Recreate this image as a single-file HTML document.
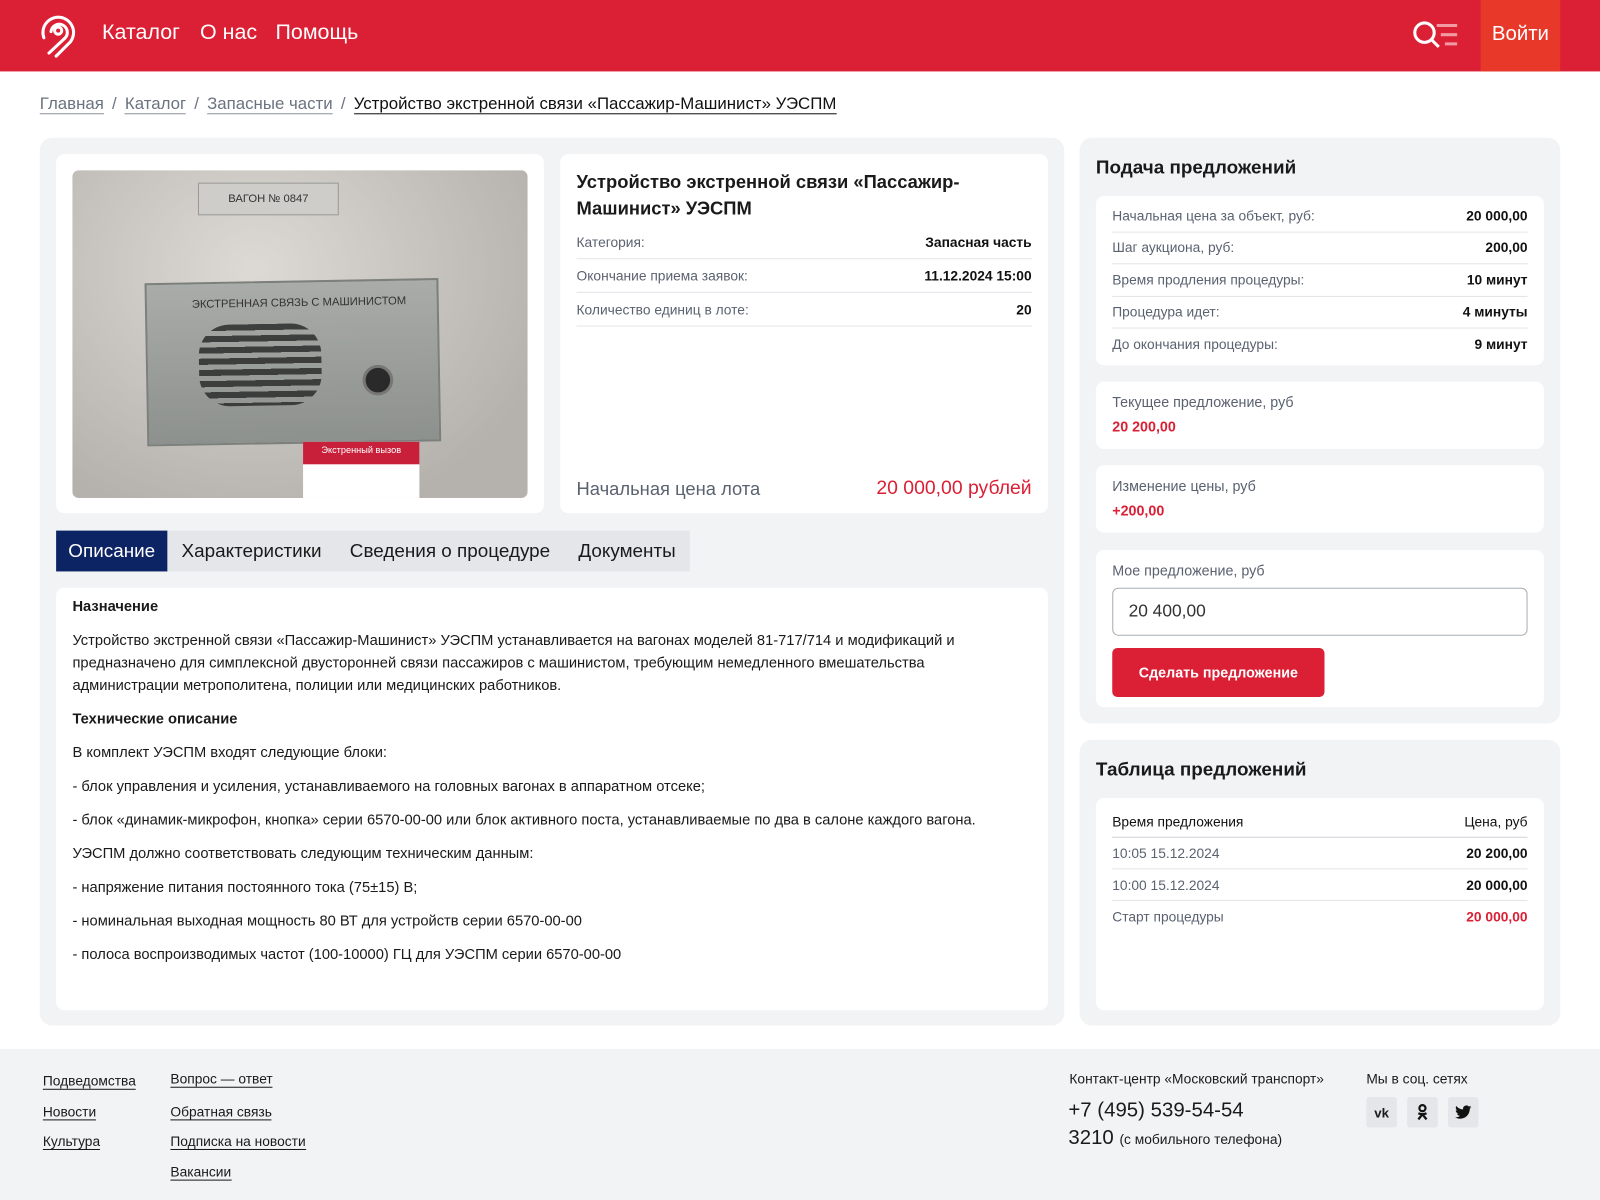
<!DOCTYPE html>
<html><head><meta charset="utf-8"><style>
*{box-sizing:border-box;margin:0;padding:0}
html,body{width:1600px;height:1200px;overflow:hidden;background:#fff}
#w{width:1568px;height:1176px;position:relative;transform:scale(1.020408);transform-origin:0 0;font-family:"Liberation Sans",sans-serif;color:#1a1a1a}
.abs{position:absolute}
.hdr{left:0;top:0;width:1568px;height:70px;background:#db1f35}
.nav{color:#fff;font-size:21px;top:20px}
.bc{top:93px;left:39px;font-size:16.5px;color:#6b7380}
.bc a{color:#6b7380;text-decoration:none;border-bottom:1px solid #8a919c}
.bc span{margin:0 8px}
.panel{background:#f2f3f5;border-radius:12px}
.card{background:#fff;border-radius:8px}
.row{display:flex;justify-content:space-between;border-bottom:1px solid #e3e5e8;font-size:13.5px;color:#5a6270;height:33px;align-items:center}
.row b{color:#111;font-size:13.5px}
.desc{font-size:14.4px;line-height:22px;color:#1a1a1a}
.desc p{margin-bottom:11px}
.ft a{color:#1a1a1a;font-size:13.5px;text-decoration:none;border-bottom:1px solid #1a1a1a;position:absolute}
.soc{width:30px;height:30px;background:#e4e6ea;border-radius:3px;display:flex;align-items:center;justify-content:center;font-weight:bold;font-size:13px;top:1075px;position:absolute}
.tab{white-space:nowrap;height:40px;line-height:40px;text-align:center}
</style></head><body><div id="w">
<div class="abs hdr"></div>
<svg class="abs" style="left:38px;top:13px" width="38" height="44" viewBox="0 0 38 44" fill="none" stroke="#fff" stroke-width="3" stroke-linecap="round">
<path d="M10 39 L26 24 A8 8 0 1 0 12 18"/><path d="M17 42 L31 28 A15 15 0 1 0 5 24"/><circle cx="19" cy="17" r="3.5"/></svg>
<div class="abs nav" style="left:100px">Каталог</div>
<div class="abs nav" style="left:196px">О нас</div>
<div class="abs nav" style="left:270px">Помощь</div>
<svg class="abs" style="left:1384px;top:20px" width="46" height="30" viewBox="0 0 46 30" fill="none" stroke-width="3">
<circle cx="12" cy="12" r="9.5" stroke="#fff"/><path d="M19 19 L26 26" stroke="#fff"/><path d="M24 5H44M28 14H44M32 23H44" stroke="#f29aa3"/></svg>
<div class="abs" style="left:1451px;top:0;width:78px;height:70px;background:#e8382a;color:#fff;font-size:20px;line-height:66px;text-align:center">Войти</div>

<div class="abs bc"><a>Главная</a><span>/</span><a>Каталог</a><span>/</span><a>Запасные части</a><span>/</span><a style="color:#111;border-color:#111">Устройство экстренной связи «Пассажир-Машинист» УЭСПМ</a></div>

<div class="abs panel" style="left:39px;top:135px;width:1004px;height:870px"></div>
<div class="abs card" style="left:55px;top:151px;width:478px;height:352px"></div>
<div class="abs" style="left:71px;top:167px;width:446px;height:321px;border-radius:6px;overflow:hidden;background:radial-gradient(ellipse at 40% 30%,#ddd9d4,#b5b1ac 80%)">
 <div class="abs" style="left:123px;top:12px;width:138px;height:32px;background:#cfcdca;border:1px solid #999;font-size:11px;line-height:30px;text-align:center;color:#333">ВАГОН № 0847</div>
 <div class="abs" style="left:72px;top:108px;width:288px;height:160px;background:linear-gradient(#a9aca8,#8d918e);border:2px solid #7c807d;transform:rotate(-1deg)">
  <div style="font-size:11px;color:#333;margin:14px 0 0 44px">ЭКСТРЕННАЯ СВЯЗЬ С МАШИНИСТОМ</div>
  <div class="abs" style="left:50px;top:40px;width:120px;height:80px;background:repeating-linear-gradient(#2b2d2c 0 6px,transparent 6px 11px);border-radius:30px;opacity:.85"></div>
  <div class="abs" style="left:210px;top:82px;width:30px;height:30px;border-radius:50%;background:#2a2a2a;border:3px solid #777"></div>
 </div>
 <div class="abs" style="left:226px;top:266px;width:114px;height:55px;background:#fff"><div style="background:#c8203a;color:#fff;font-size:9px;height:22px;text-align:center;line-height:16px">Экстренный вызов</div></div>
</div>
<div class="abs card" style="left:549px;top:151px;width:478px;height:352px;padding:14px 16px">
 <div style="font-size:18px;font-weight:bold;line-height:26px;margin-bottom:4px">Устройство экстренной связи «Пассажир-<br>Машинист» УЭСПМ</div>
 <div class="row"><span>Категория:</span><b>Запасная часть</b></div>
 <div class="row"><span>Окончание приема заявок:</span><b>11.12.2024 15:00</b></div>
 <div class="row"><span>Количество единиц в лоте:</span><b>20</b></div>
 <div class="abs" style="left:16px;top:318px;font-size:18px;color:#5a6270">Начальная цена лота</div>
 <div class="abs" style="right:16px;top:317px;font-size:19px;color:#db1f35">20 000,00 рублей</div>
</div>
<div class="abs" style="left:55px;top:520px;width:621px;height:40px;background:#e4e6ea;font-size:18.5px;display:flex">
 <div class="tab" style="background:#0c2463;color:#fff;width:109px">Описание</div>
 <div class="tab" style="width:165px">Характеристики</div><div class="tab" style="width:224px">Сведения о процедуре</div><div class="tab" style="width:123px">Документы</div>
</div>
<div class="abs card desc" style="left:55px;top:576px;width:972px;height:414px;padding:8px 16px">
<p><b>Назначение</b></p>
<p>Устройство экстренной связи «Пассажир-Машинист» УЭСПМ устанавливается на вагонах моделей 81-717/714 и модификаций и предназначено для симплексной двусторонней связи пассажиров с машинистом, требующим немедленного вмешательства администрации метрополитена, полиции или медицинских работников.</p>
<p><b>Технические описание</b></p>
<p>В комплект УЭСПМ входят следующие блоки:</p>
<p>- блок управления и усиления, устанавливаемого на головных вагонах в аппаратном отсеке;</p>
<p>- блок «динамик-микрофон, кнопка» серии 6570-00-00 или блок активного поста, устанавливаемые по два в салоне каждого вагона.</p>
<p>УЭСПМ должно соответствовать следующим техническим данным:</p>
<p>- напряжение питания постоянного тока (75±15) В;</p>
<p>- номинальная выходная мощность 80 ВТ для устройств серии 6570-00-00</p>
<p>- полоса воспроизводимых частот (100-10000) ГЦ для УЭСПМ серии 6570-00-00</p>
</div>

<div class="abs panel" style="left:1058px;top:135px;width:471px;height:574px"></div>
<div class="abs" style="left:1074px;top:153px;font-size:18.5px;font-weight:bold">Подача предложений</div>
<div class="abs card" style="left:1074px;top:192px;width:439px;height:166px;padding:4px 16px">
 <div class="row" style="height:31.5px"><span>Начальная цена за объект, руб:</span><b>20 000,00</b></div>
 <div class="row" style="height:31.5px"><span>Шаг аукциона, руб:</span><b>200,00</b></div>
 <div class="row" style="height:31.5px"><span>Время продления процедуры:</span><b>10 минут</b></div>
 <div class="row" style="height:31.5px"><span>Процедура идет:</span><b>4 минуты</b></div>
 <div class="row" style="height:31.5px;border:0"><span>До окончания процедуры:</span><b>9 минут</b></div>
</div>
<div class="abs card" style="left:1074px;top:374px;width:439px;height:66px;padding:12px 16px;font-size:14px;color:#5a6270">Текущее предложение, руб<div style="color:#db1f35;font-weight:bold;margin-top:8px">20 200,00</div></div>
<div class="abs card" style="left:1074px;top:456px;width:439px;height:66px;padding:12px 16px;font-size:14px;color:#5a6270">Изменение цены, руб<div style="color:#db1f35;font-weight:bold;margin-top:8px">+200,00</div></div>
<div class="abs card" style="left:1074px;top:539px;width:439px;height:154px;padding:12px 16px;font-size:14px;color:#5a6270">Мое предложение, руб
 <div style="margin-top:9px;height:47px;border:1px solid #a7adb5;border-radius:6px;font-size:17px;color:#333;padding:12px 15px">20 400,00</div>
 <div style="margin-top:12px;width:208px;height:48px;background:#db1f35;color:#fff;border-radius:5px;font-weight:bold;font-size:14px;text-align:center;line-height:48px">Сделать предложение</div>
</div>

<div class="abs panel" style="left:1058px;top:725px;width:471px;height:280px"></div>
<div class="abs" style="left:1074px;top:743px;font-size:18.5px;font-weight:bold">Таблица предложений</div>
<div class="abs card" style="left:1074px;top:782px;width:439px;height:208px;padding:8px 16px">
 <div class="row" style="height:31px;color:#111;border-color:#d0d3d8"><span>Время предложения</span><span>Цена, руб</span></div>
 <div class="row" style="height:31px"><span>10:05 15.12.2024</span><b>20 200,00</b></div>
 <div class="row" style="height:31px"><span>10:00 15.12.2024</span><b>20 000,00</b></div>
 <div class="row" style="height:31px;border:0"><span>Старт процедуры</span><b style="color:#db1f35">20 000,00</b></div>
</div>

<div class="abs" style="left:0;top:1028px;width:1568px;height:160px;background:#f2f3f5"></div>
<div class="ft">
<a style="left:42px;top:1052px">Подведомства</a><a style="left:42px;top:1082px">Новости</a><a style="left:42px;top:1111px">Культура</a>
<a style="left:167px;top:1050px">Вопрос — ответ</a><a style="left:167px;top:1082px">Обратная связь</a><a style="left:167px;top:1111px">Подписка на новости</a><a style="left:167px;top:1141px">Вакансии</a>
</div>
<div class="abs" style="left:1048px;top:1050px;font-size:13.5px">Контакт-центр «Московский транспорт»</div>
<div class="abs" style="left:1047px;top:1077px;font-size:20px">+7 (495) 539-54-54</div>
<div class="abs" style="left:1047px;top:1104px;font-size:20px">3210 <span style="font-size:13.5px">(с мобильного телефона)</span></div>
<div class="abs" style="left:1339px;top:1050px;font-size:13.5px">Мы в соц. сетях</div>
<div class="soc" style="left:1339px">vk</div>
<div class="soc" style="left:1379px"><svg width="14" height="18" viewBox="0 0 14 18" fill="none" stroke="#111" stroke-width="2.2"><circle cx="7" cy="5" r="3"/><path d="M3 10q4 2 8 0M7 11l-4 5M7 11l4 5"/></svg></div>
<div class="soc" style="left:1419px"><svg width="16" height="14" viewBox="0 0 24 20"><path fill="#111" d="M24 2.4a10 10 0 0 1-2.8.8A5 5 0 0 0 23.3.4a10 10 0 0 1-3.1 1.2A4.9 4.9 0 0 0 11.8 6 14 14 0 0 1 1.7.9a4.9 4.9 0 0 0 1.5 6.6 4.9 4.9 0 0 1-2.2-.6 4.9 4.9 0 0 0 3.9 4.9 5 5 0 0 1-2.2.1 4.9 4.9 0 0 0 4.6 3.4A9.9 9.9 0 0 1 0 17.3 14 14 0 0 0 7.5 19.5c9.1 0 14-7.5 14-14v-.6A10 10 0 0 0 24 2.4z"/></svg></div>
</div></body></html>
